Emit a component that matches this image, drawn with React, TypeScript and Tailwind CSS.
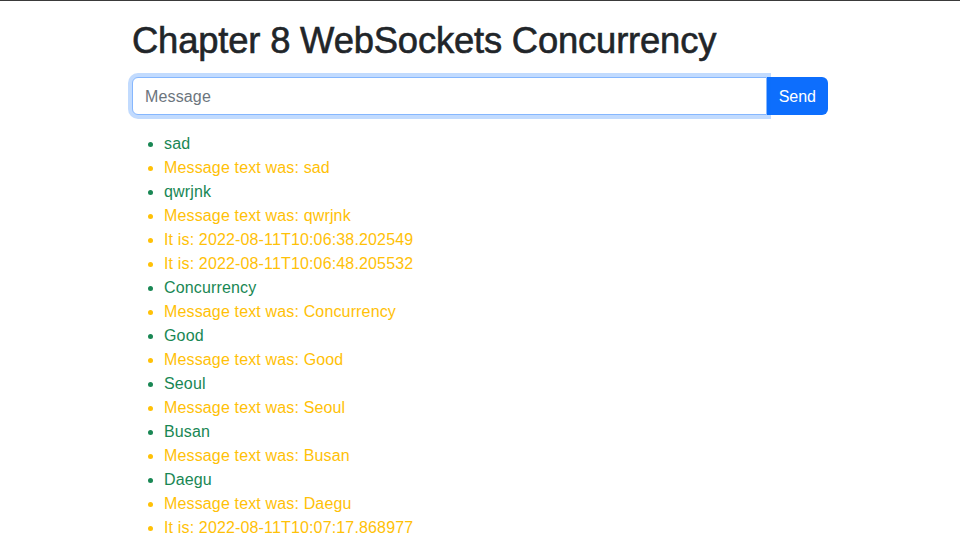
import React from 'react';

type Msg = { text: string; kind: 'sent' | 'echo' };

const messages: Msg[] = [
  { text: 'sad', kind: 'sent' },
  { text: 'Message text was: sad', kind: 'echo' },
  { text: 'qwrjnk', kind: 'sent' },
  { text: 'Message text was: qwrjnk', kind: 'echo' },
  { text: 'It is: 2022-08-11T10:06:38.202549', kind: 'echo' },
  { text: 'It is: 2022-08-11T10:06:48.205532', kind: 'echo' },
  { text: 'Concurrency', kind: 'sent' },
  { text: 'Message text was: Concurrency', kind: 'echo' },
  { text: 'Good', kind: 'sent' },
  { text: 'Message text was: Good', kind: 'echo' },
  { text: 'Seoul', kind: 'sent' },
  { text: 'Message text was: Seoul', kind: 'echo' },
  { text: 'Busan', kind: 'sent' },
  { text: 'Message text was: Busan', kind: 'echo' },
  { text: 'Daegu', kind: 'sent' },
  { text: 'Message text was: Daegu', kind: 'echo' },
  { text: 'It is: 2022-08-11T10:07:17.868977', kind: 'echo' },
];

export default function App() {
  return (
    <div className="min-h-screen bg-white border-t border-[#3a3a3a] font-['Liberation_Sans',Arial,sans-serif] text-[#212529]">
      <div className="w-[720px] mx-auto px-3 pt-[18px]">
        <h1 className="text-[36.4px] leading-[1.2] font-medium tracking-[-0.18px] [-webkit-text-stroke:0.6px_#212529] mb-[14px]">
          Chapter 8 WebSockets Concurrency
        </h1>

        {/* message form */}
        <div className="flex items-stretch">
          <input
            type="text"
            placeholder="Message"
            className="relative z-10 flex-1 h-[38px] px-3 pt-[2px] text-base bg-white border border-[#86b7fe] rounded-l-[6px] outline-none shadow-[0_0_0_4px_rgba(13,110,253,0.25)] placeholder:text-[#6c757d] tracking-[0.15px]"
          />
          <button className="h-[38px] px-3 pt-[2px] text-base text-white bg-[#0d6efd] rounded-r-[6px]">
            Send
          </button>
        </div>

        <ul className="mt-[17px] pl-8 list-disc">
          {messages.map((m, i) => (
            <li
              key={i}
              className={`text-base leading-6 tracking-[0.15px] ${m.kind === 'sent' ? 'text-[#198754]' : 'text-[#ffc107]'}`}
            >
              {m.text}
            </li>
          ))}
        </ul>
      </div>
    </div>
  );
}
